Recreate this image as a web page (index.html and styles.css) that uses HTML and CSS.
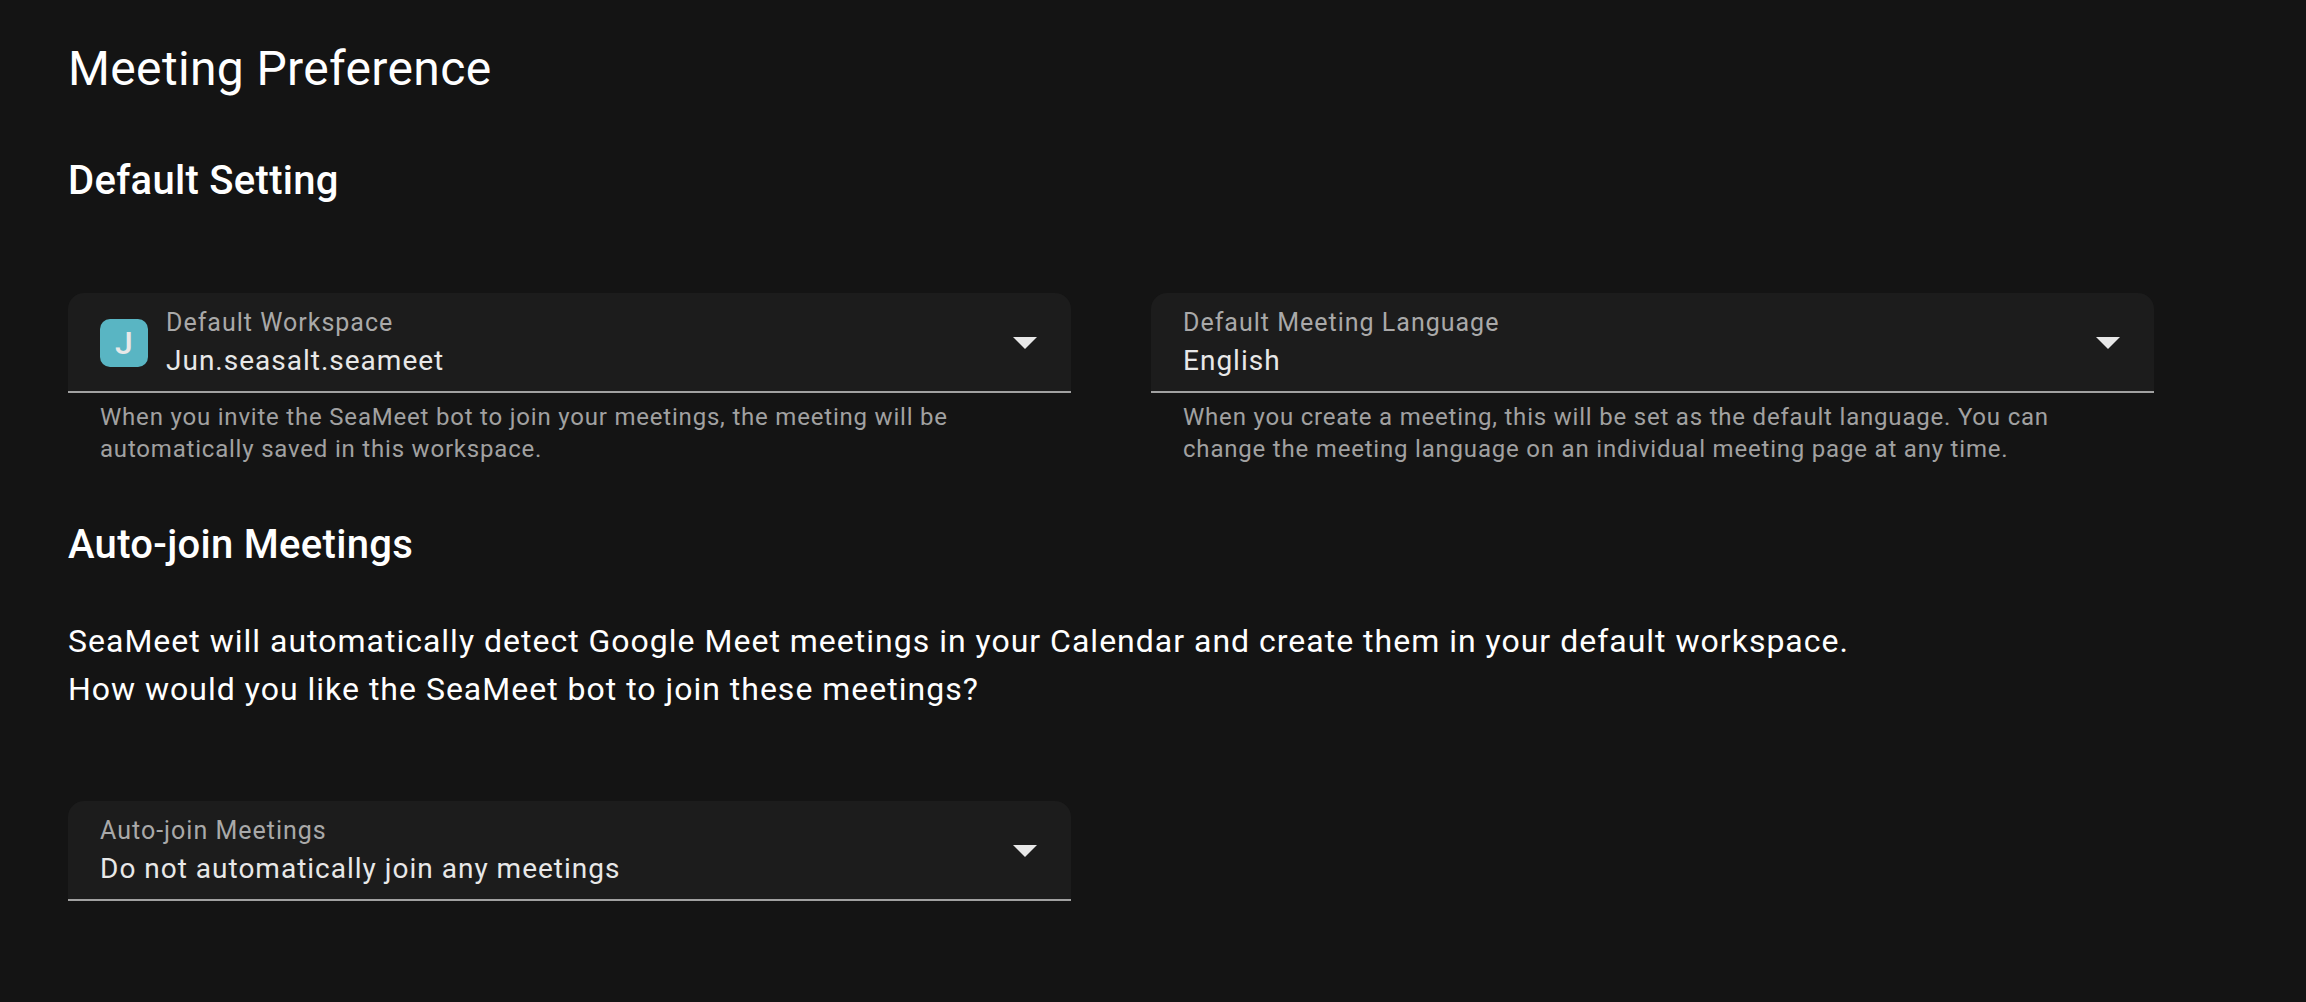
FILE: index.html
```
<!DOCTYPE html>
<html lang="en">
<head>
<meta charset="utf-8">
<meta name="viewport" content="width=device-width, initial-scale=1">
<title>Meeting Preference</title>
<link rel="stylesheet" href="styles.css">
</head>
<body>
<main class="page">
  <h1 class="page-title">Meeting Preference</h1>

  <section>
    <h2 class="section-title">Default Setting</h2>
    <div class="field-grid field-grid-first">
      <div>
        <div class="field">
          <span class="avatar" aria-hidden="true">J</span>
          <div class="field-body">
            <label class="field-label" for="workspace">Default Workspace</label>
            <select class="field-select" id="workspace" aria-describedby="workspace-hint">
              <option>Jun.seasalt.seameet</option>
            </select>
          </div>
          <svg class="arrow" viewBox="0 0 24 12" aria-hidden="true"><path d="M0 0h24L12 12z"/></svg>
        </div>
        <p class="hint" id="workspace-hint">When you invite the SeaMeet bot to join your meetings, the meeting will be automatically saved in this workspace.</p>
      </div>
      <div>
        <div class="field">
          <div class="field-body">
            <label class="field-label" for="language">Default Meeting Language</label>
            <select class="field-select" id="language" aria-describedby="language-hint">
              <option>English</option>
            </select>
          </div>
          <svg class="arrow" viewBox="0 0 24 12" aria-hidden="true"><path d="M0 0h24L12 12z"/></svg>
        </div>
        <p class="hint" id="language-hint">When you create a meeting, this will be set as the default language. You can change the meeting language on an individual meeting page at any time.</p>
      </div>
    </div>
  </section>

  <section>
    <h2 class="section-title">Auto-join Meetings</h2>
    <p class="intro">SeaMeet will automatically detect Google Meet meetings in your Calendar and create them in your default workspace.<br>How would you like the SeaMeet bot to join these meetings?</p>
    <div class="field-grid field-grid-join">
      <div class="field">
        <div class="field-body">
          <label class="field-label" for="autojoin">Auto-join Meetings</label>
          <select class="field-select" id="autojoin">
            <option>Do not automatically join any meetings</option>
          </select>
        </div>
        <svg class="arrow" viewBox="0 0 24 12" aria-hidden="true"><path d="M0 0h24L12 12z"/></svg>
      </div>
    </div>
  </section>
</main>
</body>
</html>
```
FILE: styles.css
```
* {
  box-sizing: border-box;
}

body {
  margin: 0;
  background: #141414;
  color: #fff;
  font-family: Roboto, "Liberation Sans", sans-serif;
}

h1, h2, p {
  margin: 0;
}

.page {
  padding: 37px 152px 100px 68px;
}

.page-title {
  font-size: 48px;
  font-weight: 400;
  line-height: 64px;
  letter-spacing: 0.0075em;
}

.section-title {
  margin-top: 48px;
  font-size: 40px;
  font-weight: 500;
  line-height: 64px;
  letter-spacing: 0.0075em;
}

.field-grid {
  display: grid;
  grid-template-columns: 1fr 1fr;
  column-gap: 80px;
}

.field-grid-first {
  margin-top: 80px;
}

.field-grid-join {
  margin-top: 88px;
}

.field {
  display: flex;
  align-items: center;
  min-height: 100px;
  padding: 12px 34px 10px 32px;
  border-bottom: 2px solid #a1a1a1;
  border-radius: 16px 16px 0 0;
  background: #1c1c1c;
}

.avatar {
  flex: none;
  width: 48px;
  margin-right: 18px;
  border-radius: 10px;
  background: #59b5c3;
  color: #e8e8e8;
  font-size: 32px;
  font-weight: 500;
  line-height: 48px;
  text-align: center;
}

.field-body {
  flex: 1;
  min-width: 0;
}

.field-label {
  display: block;
  color: #a9a9a9;
  font-size: 25px;
  line-height: 36px;
  letter-spacing: 1px;
}

.field-select {
  display: block;
  width: 100%;
  height: 40px;
  padding: 0;
  border: 0;
  appearance: none;
  background: transparent;
  color: #e8e8e8;
  font: 400 28px/40px Roboto, "Liberation Sans", sans-serif;
  letter-spacing: 1px;
}

.field-select option {
  background: #1c1c1c;
}

.arrow {
  flex: none;
  width: 24px;
  height: 12px;
  fill: #e8e8e8;
}

.hint {
  padding: 8px 32px 0;
  color: #a1a1a1;
  font-size: 24px;
  line-height: 32px;
  letter-spacing: 0.0333em;
}

.intro {
  margin-top: 40px;
  font-size: 32px;
  line-height: 48px;
  letter-spacing: 1px;
}
```
